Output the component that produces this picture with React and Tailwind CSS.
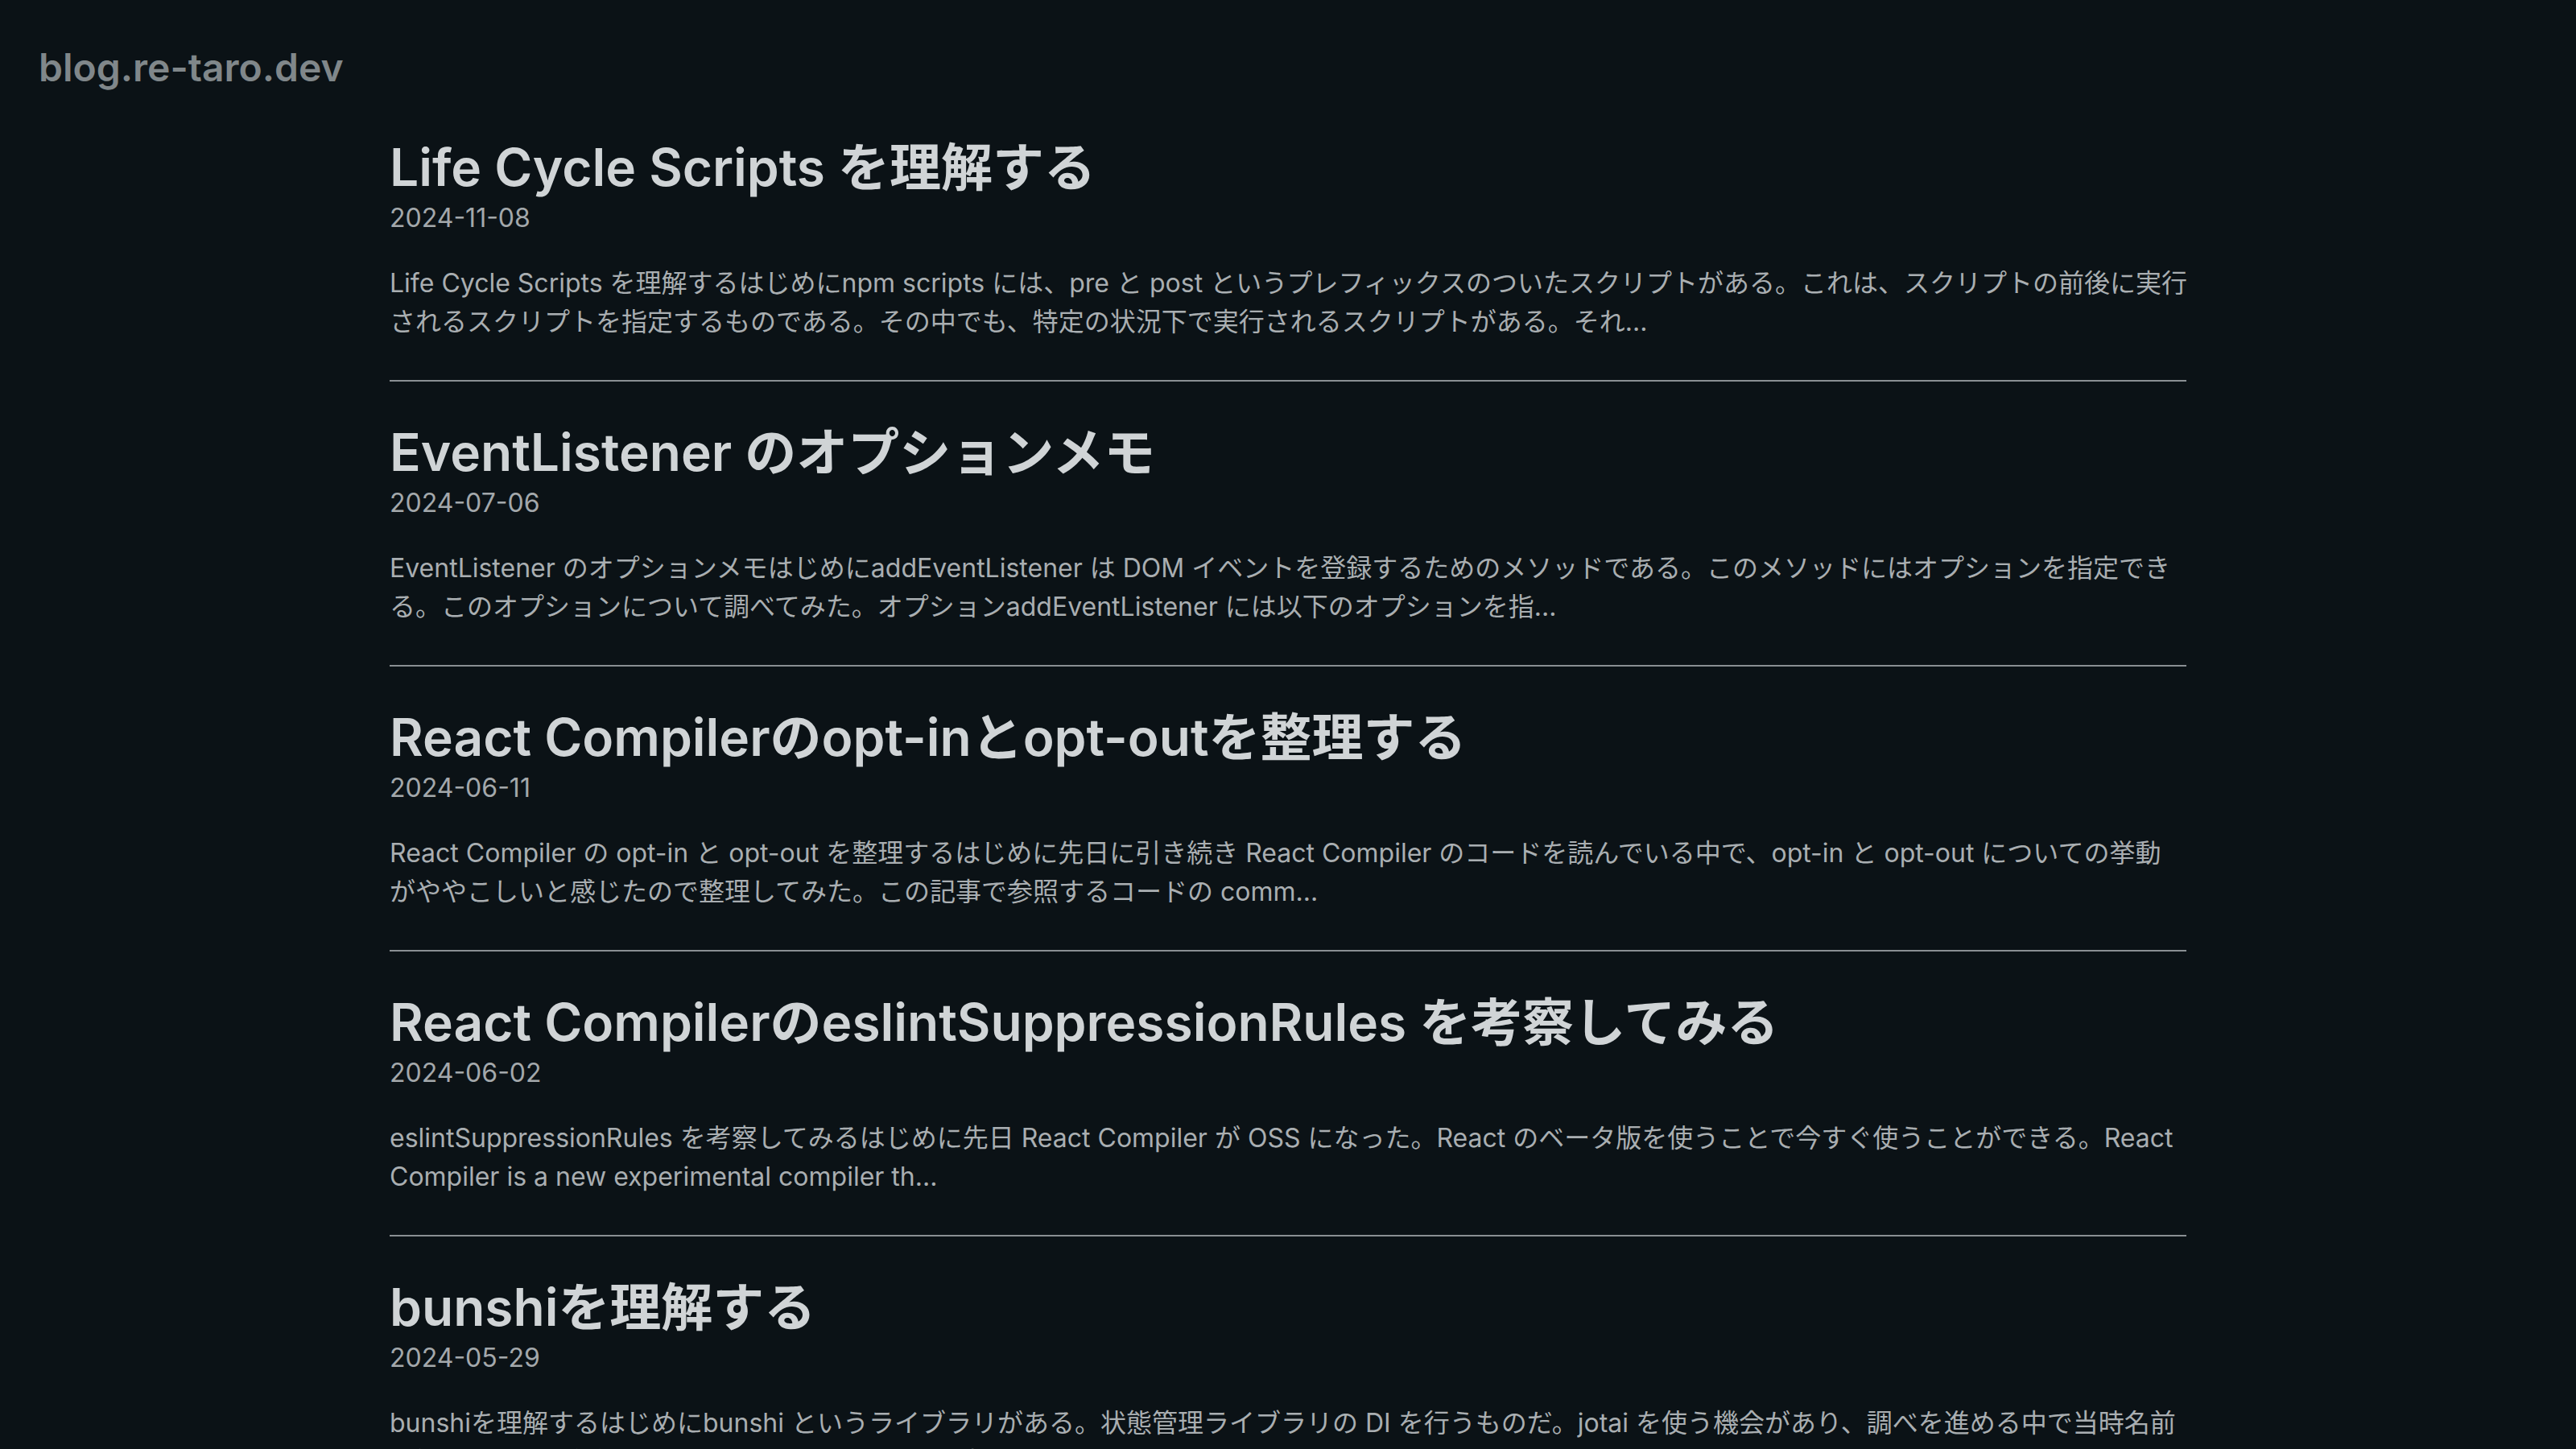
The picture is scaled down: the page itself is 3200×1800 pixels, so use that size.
import React from 'react';

const posts = [
  {
    title: 'Life Cycle Scripts を理解する',
    date: '2024-11-08',
    excerpt: [
      'Life Cycle Scripts を理解するはじめにnpm scripts には、pre と post というプレフィックスのついたスクリプトがある。これは、スクリプトの前後に実行',
      'されるスクリプトを指定するものである。その中でも、特定の状況下で実行されるスクリプトがある。それ...',
    ],
  },
  {
    title: 'EventListener のオプションメモ',
    date: '2024-07-06',
    excerpt: [
      'EventListener のオプションメモはじめにaddEventListener は DOM イベントを登録するためのメソッドである。このメソッドにはオプションを指定でき',
      'る。このオプションについて調べてみた。オプションaddEventListener には以下のオプションを指...',
    ],
  },
  {
    title: 'React Compilerのopt-inとopt-outを整理する',
    date: '2024-06-11',
    excerpt: [
      'React Compiler の opt-in と opt-out を整理するはじめに先日に引き続き React Compiler のコードを読んでいる中で、opt-in と opt-out についての挙動',
      'がややこしいと感じたので整理してみた。この記事で参照するコードの comm...',
    ],
  },
  {
    title: 'React CompilerのeslintSuppressionRules を考察してみる',
    date: '2024-06-02',
    excerpt: [
      'eslintSuppressionRules を考察してみるはじめに先日 React Compiler が OSS になった。React のベータ版を使うことで今すぐ使うことができる。React',
      'Compiler is a new experimental compiler th...',
    ],
  },
  {
    title: 'bunshiを理解する',
    date: '2024-05-29',
    excerpt: [
      'bunshiを理解するはじめにbunshi というライブラリがある。状態管理ライブラリの DI を行うものだ。jotai を使う機会があり、調べを進める中で当時名前',
      'を知ったので、仕組みを理解するためにコードを読んでみた...',
    ],
  },
];

const PostItem = ({ post }) => (
  <article className="py-12 border-b-2 border-[#8a8f93]">
    <h2 className="text-[64px] leading-[80px] font-semibold text-[#d0d4d6]">{post.title}</h2>
    <p className="mt-[3px] text-[32px] leading-[40px] text-[#a3a8ab]">{post.date}</p>
    <p className="mt-[37px] text-[32px] leading-[48px] text-[#a9aeb1]">
      {post.excerpt.map((line, i) => (
        <span key={i} className="block whitespace-nowrap">
          {line}
        </span>
      ))}
    </p>
  </article>
);

export default function App() {
  return (
    <div className="min-h-screen bg-[#0b1216] font-['Inter','Noto_Sans_CJK_JP',sans-serif]">
      <header className="pt-12 px-12">
        <a href="#" className="text-[48px] leading-[72px] font-semibold text-[#80878a]">
          blog.re-taro.dev
        </a>
      </header>
      <main className="w-[2232px] mx-auto">
        {posts.map((post) => (
          <PostItem key={post.date} post={post} />
        ))}
      </main>
    </div>
  );
}
